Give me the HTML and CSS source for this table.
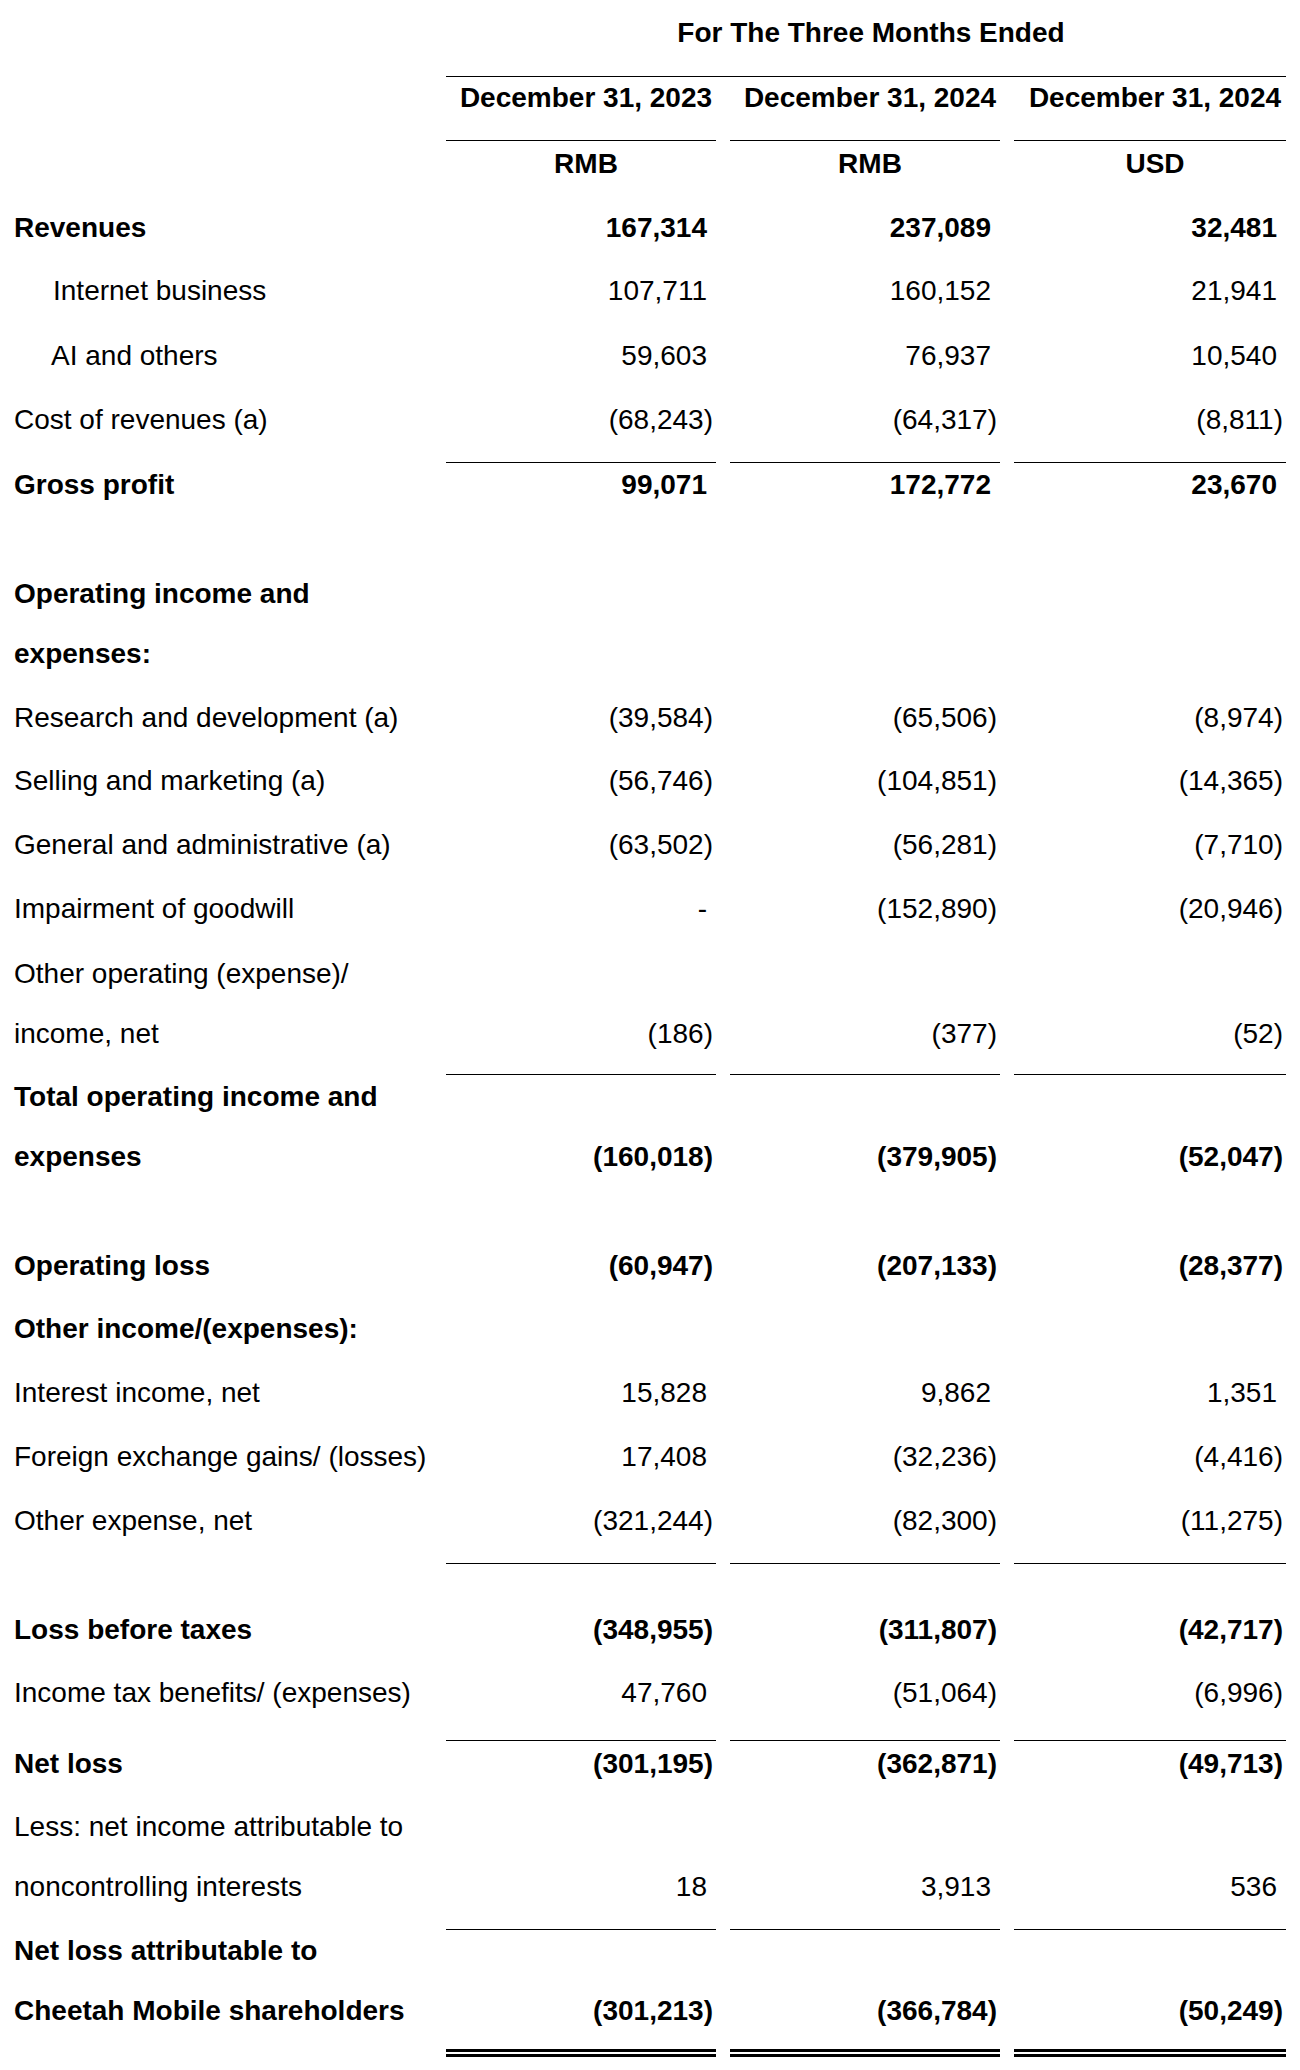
FILE: index.html
```html
<!DOCTYPE html>
<html lang="en">
<head>
<meta charset="utf-8">
<title>Condensed Consolidated Statements of Operations</title>
<link rel="stylesheet" href="styles.css">
</head>
<body>
<table class="fin">
  <colgroup>
    <col class="c-label">
    <col class="c-num">
    <col class="c-num">
    <col class="c-num c-last">
  </colgroup>
  <thead>
    <tr class="h-title">
      <th class="lab"></th>
      <th class="hd" colspan="3">For The Three Months Ended</th>
    </tr>
    <tr class="h-date">
      <th class="lab"></th>
      <th class="hd">December 31, 2023</th>
      <th class="hd">December 31, 2024</th>
      <th class="hd">December 31, 2024</th>
    </tr>
    <tr class="h-cur">
      <th class="lab"></th>
      <th class="hd">RMB</th>
      <th class="hd">RMB</th>
      <th class="hd">USD</th>
    </tr>
  </thead>
  <tbody>
    <tr class="b pt17">
      <td class="lab">Revenues</td>
      <td class="n p">167,314</td><td class="n p">237,089</td><td class="n p">32,481</td>
    </tr>
    <tr class="pt15">
      <td class="lab ind ind-i">Internet business</td>
      <td class="n p">107,711</td><td class="n p">160,152</td><td class="n p">21,941</td>
    </tr>
    <tr class="pt17">
      <td class="lab ind">AI and others</td>
      <td class="n p">59,603</td><td class="n p">76,937</td><td class="n p">10,540</td>
    </tr>
    <tr class="pt16 pb26">
      <td class="lab">Cost of revenues (a)</td>
      <td class="n">(68,243)</td><td class="n">(64,317)</td><td class="n">(8,811)</td>
    </tr>
    <tr class="b rule pt7">
      <td class="lab">Gross profit</td>
      <td class="n p">99,071</td><td class="n p">172,772</td><td class="n p">23,670</td>
    </tr>
    <tr class="b pt61">
      <td class="lab"><div class="ml">Operating income and expenses:</div></td>
      <td class="n"></td><td class="n"></td><td class="n"></td>
    </tr>
    <tr class="pt16">
      <td class="lab">Research and development (a)</td>
      <td class="n">(39,584)</td><td class="n">(65,506)</td><td class="n">(8,974)</td>
    </tr>
    <tr class="pt15">
      <td class="lab">Selling and marketing (a)</td>
      <td class="n">(56,746)</td><td class="n">(104,851)</td><td class="n">(14,365)</td>
    </tr>
    <tr class="pt16">
      <td class="lab">General and administrative (a)</td>
      <td class="n">(63,502)</td><td class="n">(56,281)</td><td class="n">(7,710)</td>
    </tr>
    <tr class="pt16">
      <td class="lab">Impairment of goodwill</td>
      <td class="n p">-</td><td class="n">(152,890)</td><td class="n">(20,946)</td>
    </tr>
    <tr class="pt17 pb24">
      <td class="lab"><div class="ml">Other operating (expense)/ income, net</div></td>
      <td class="n">(186)</td><td class="n">(377)</td><td class="n">(52)</td>
    </tr>
    <tr class="b rule pt7">
      <td class="lab"><div class="ml">Total operating income and expenses</div></td>
      <td class="n">(160,018)</td><td class="n">(379,905)</td><td class="n">(52,047)</td>
    </tr>
    <tr class="b pt61">
      <td class="lab">Operating loss</td>
      <td class="n">(60,947)</td><td class="n">(207,133)</td><td class="n">(28,377)</td>
    </tr>
    <tr class="b pt15">
      <td class="lab">Other income/(expenses):</td>
      <td class="n"></td><td class="n"></td><td class="n"></td>
    </tr>
    <tr class="pt16">
      <td class="lab">Interest income, net</td>
      <td class="n p">15,828</td><td class="n p">9,862</td><td class="n p">1,351</td>
    </tr>
    <tr class="pt16">
      <td class="lab">Foreign exchange gains/ (losses)</td>
      <td class="n p">17,408</td><td class="n">(32,236)</td><td class="n">(4,416)</td>
    </tr>
    <tr class="pt16 pb26">
      <td class="lab">Other expense, net</td>
      <td class="n">(321,244)</td><td class="n">(82,300)</td><td class="n">(11,275)</td>
    </tr>
    <tr class="b rule pt51">
      <td class="lab">Loss before taxes</td>
      <td class="n">(348,955)</td><td class="n">(311,807)</td><td class="n">(42,717)</td>
    </tr>
    <tr class="pt15 pb31">
      <td class="lab">Income tax benefits/ (expenses)</td>
      <td class="n p">47,760</td><td class="n">(51,064)</td><td class="n">(6,996)</td>
    </tr>
    <tr class="b rule pt8">
      <td class="lab">Net loss</td>
      <td class="n">(301,195)</td><td class="n">(362,871)</td><td class="n">(49,713)</td>
    </tr>
    <tr class="pt15 pb26">
      <td class="lab"><div class="ml">Less: net income attributable to noncontrolling interests</div></td>
      <td class="n p">18</td><td class="n p">3,913</td><td class="n p">536</td>
    </tr>
    <tr class="b rule total pt6">
      <td class="lab"><div class="ml">Net loss attributable to Cheetah Mobile shareholders</div></td>
      <td class="n">(301,213)</td><td class="n">(366,784)</td><td class="n">(50,249)</td>
    </tr>
  </tbody>
</table>
</body>
</html>
```

FILE: styles.css
```css
html, body {
  margin: 0;
  padding: 0;
  background: #ffffff;
}

body {
  font-family: "Liberation Sans", Arial, sans-serif;
  font-size: 28px;
  color: #000000;
}

.fin {
  width: 1300px;
  table-layout: fixed;
  border-collapse: separate;
  border-spacing: 14px 0;
}

.c-num { width: 270px; }
.c-last { width: 272px; }

.fin th,
.fin td {
  padding: 16px 0;
  line-height: 32px;
  vertical-align: bottom;
  font-weight: normal;
  box-sizing: border-box;
}

.fin .lab {
  text-align: left;
  padding-left: 0;
}

.fin td.ind { padding-left: 37px; }
.fin td.ind-i { padding-left: 39px; }

.fin .n {
  text-align: right;
  padding-top: 0;
  padding-right: 3px;
  white-space: nowrap;
}

.fin .n.p { padding-right: 9px; }

.fin .b td { font-weight: bold; }

/* multi-line labels: 60px line pitch, half-leading trimmed */
.ml {
  line-height: 60px;
  margin: -14px 0;
}

/* header */
.fin thead th { padding: 0; }

.fin th.hd {
  font-weight: bold;
  text-align: center;
  padding-left: 10px;
  white-space: nowrap;
}

.fin .h-title th.hd {
  padding-top: 17px;
  padding-bottom: 27px;
  border-bottom: 1px solid #000;
}

.fin .h-date th.hd {
  padding-top: 5px;
  padding-bottom: 26px;
  border-bottom: 1px solid #000;
}

.fin .h-cur th.hd {
  padding-top: 7px;
  padding-bottom: 15px;
}

/* label top spacing per row */
.fin .pt6 .lab { padding-top: 6px; }
.fin .pt7 .lab { padding-top: 7px; }
.fin .pt8 .lab { padding-top: 8px; }
.fin .pt15 .lab { padding-top: 15px; }
.fin .pt16 .lab { padding-top: 16px; }
.fin .pt17 .lab { padding-top: 17px; }
.fin .pt51 .lab { padding-top: 51px; }
.fin .pt61 .lab { padding-top: 61px; }

/* space below rows that sit above a rule */
.fin .pb24 td { padding-bottom: 24px; }
.fin .pb26 td { padding-bottom: 26px; }
.fin .pb31 td { padding-bottom: 31px; }

/* rules */
.fin .rule td.n { border-top: 1px solid #000; }

.fin .total td.lab { padding-bottom: 30px; }
.fin .total td.n {
  padding-bottom: 22px;
  border-bottom: 8px double #000;
}
```
